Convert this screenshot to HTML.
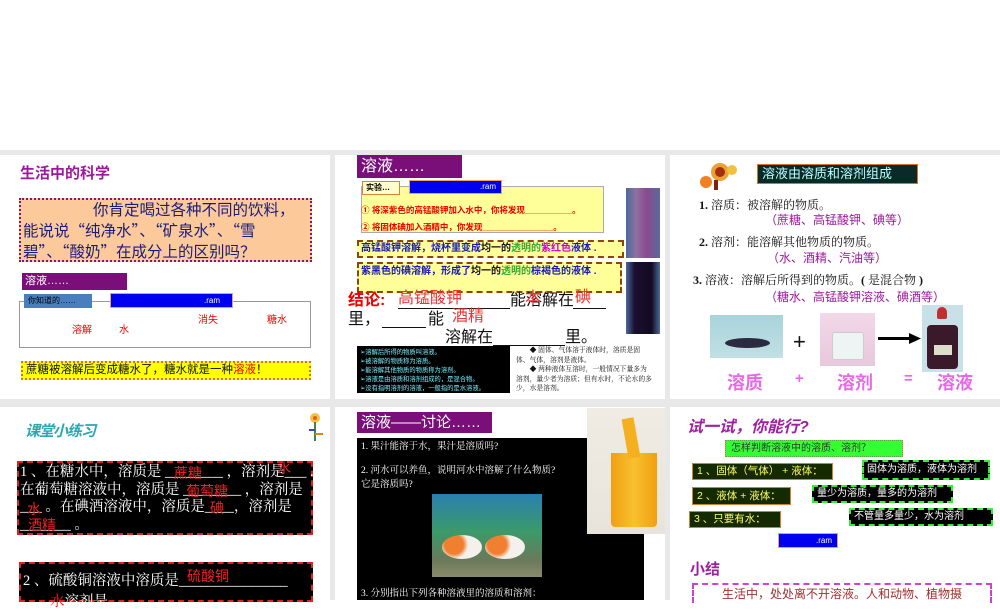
<!DOCTYPE html>
<html><head><meta charset="utf-8">
<style>
*{margin:0;padding:0;box-sizing:border-box}
body{width:1000px;height:600px;overflow:hidden;background:#fff;position:relative;font-family:"Liberation Sans","Noto Sans CJK SC",sans-serif}
.a{position:absolute;white-space:nowrap}
.p{position:absolute;background:#fff}
.serif{font-family:"Liberation Serif","Noto Serif CJK SC",serif}
.u{position:absolute;height:1px;background:#111}
.c{font-size:16px;line-height:17px}
</style></head><body>
<div class="a" style="left:0;top:150px;width:1000px;height:450px;background:#e8e8e8"></div>
<div class="p" style="left:0;top:155px;width:330px;height:244px"></div>
<div class="p" style="left:335px;top:155px;width:330px;height:244px"></div>
<div class="p" style="left:670px;top:155px;width:330px;height:244px"></div>
<div class="p" style="left:0;top:407px;width:330px;height:193px"></div>
<div class="p" style="left:335px;top:407px;width:330px;height:193px"></div>
<div class="p" style="left:670px;top:407px;width:330px;height:193px"></div>

<!-- Panel 1 -->
<div class="a" style="left:20px;top:162px;font-size:15px;font-weight:bold;color:#9b1a9b">生活中的科学</div>
<div class="a" style="left:19px;top:198px;width:293px;height:64px;background:#fcc99a;border:2px dotted #7a1a7a"></div>
<div class="a" style="left:23px;top:199px;font-size:15.5px;line-height:21px;color:#1a1a80;font-family:'Noto Sans CJK SC',sans-serif"><span style="padding-left:70px"></span>你肯定喝过各种不同的饮料，<br>能说说“纯净水”、“矿泉水”、“雪<br>碧”、“酸奶”在成分上的区别吗？</div>
<div class="a" style="left:22px;top:273px;width:105px;height:17px;background:#7a0f7a;color:#fff;font-size:11px;line-height:17px;padding-left:3px">溶液……</div>
<div class="a" style="left:19px;top:301px;width:292px;height:47px;border:1px solid #999"></div>
<div class="a" style="left:24px;top:294px;width:68px;height:14px;background:#4a7fbf;color:#000;font-size:8px;line-height:14px;padding-left:4px">你知道的……</div>
<div class="a" style="left:110px;top:293px;width:123px;height:15px;background:#0000f0;border:1px solid #f0a060;color:#fff;font-size:8px;line-height:13px;text-align:right;padding-right:12px">.ram</div>
<div class="a" style="left:198px;top:311px;font-size:10px;color:#e00">消失</div>
<div class="a" style="left:267px;top:311px;font-size:10px;color:#e00">糖水</div>
<div class="a" style="left:72px;top:321px;font-size:10px;color:#e00">溶解</div>
<div class="a" style="left:119px;top:321px;font-size:10px;color:#e00">水</div>
<div class="a" style="left:21px;top:361px;width:290px;height:19px;background:#ffff00;border:2px dotted #cc7722;font-size:11.5px;line-height:15px;padding-left:3px;color:#111">蔗糖被溶解后变成糖水了，糖水就是一种<span style="color:#e00">溶液</span>！</div>

<!-- Panel 2 -->
<div class="a" style="left:357px;top:155px;width:105px;height:23px;background:#7a0f7a;color:#fff;font-size:16px;line-height:23px;padding-left:4px">溶液……</div>
<div class="a" style="left:361px;top:186px;width:243px;height:47px;background:#ffff99;border:1px solid #aaa"></div>
<div class="a" style="left:362px;top:181px;width:38px;height:14px;background:#ffffcc;border:1px solid #e08030;font-size:8px;line-height:12px;padding-left:3px;font-weight:bold">实验…</div>
<div class="a" style="left:409px;top:180px;width:93px;height:14px;background:#0000f0;border:1px solid #f0a060;color:#fff;font-size:8px;line-height:12px;text-align:right;padding-right:5px">.ram</div>
<div class="a" style="left:361px;top:204px;font-size:8.5px;font-weight:bold;color:#e00">① 将深紫色的高锰酸钾加入水中，你将发现__________。</div>
<div class="a" style="left:361px;top:221px;font-size:8.5px;font-weight:bold;color:#e00">② 将固体碘加入酒精中，你发现_______________。</div>
<div class="a" style="left:357px;top:240px;width:267px;height:18px;background:#ffff99;border:2px dashed #8b4513;font-size:10px;font-weight:bold;line-height:14px;padding-left:2px;color:#1a1ab0">高锰酸钾溶解，烧杯里变成<span style="color:#111">均一的</span><span style="color:#3a3">透明的</span><span style="color:#c0c">紫红色</span>液体 .</div>
<div class="a" style="left:357px;top:262px;width:265px;height:31px;background:#ffff99;border:2px dashed #8b4513;font-size:10px;font-weight:bold;line-height:13px;padding:1px 0 0 2px;color:#1a1ab0;white-space:normal">紫黑色的碘溶解，形成了<span style="color:#111">均一的</span><span style="color:#3a3">透明的</span>棕褐色的液体 .</div>
<div class="a" style="left:626px;top:188px;width:34px;height:70px;background:linear-gradient(90deg,#4a6a9a,#9070a0 30%,#8a4a90 60%,#5a6a9a)"></div>
<div class="a" style="left:626px;top:262px;width:34px;height:72px;background:linear-gradient(90deg,#4a6a9a,#1a1030 25%,#120a20 75%,#4a6a9a)"></div>
<div class="a c" style="left:348px;top:292px;color:#e00;font-weight:bold">结论:</div>
<div class="u" style="left:398px;top:308px;width:112px"></div>
<div class="a c" style="left:398px;top:290px;color:#e33">高锰酸钾</div>
<div class="a c" style="left:510px;top:292px;color:#111">能溶解在</div>
<div class="a c" style="left:525px;top:290px;color:#e33">本</div>
<div class="a c" style="left:575px;top:289px;color:#e33">碘</div>
<div class="u" style="left:573px;top:308px;width:33px"></div>
<div class="a c" style="left:348px;top:311px;color:#111">里，</div>
<div class="u" style="left:382px;top:327px;width:44px"></div>
<div class="a c" style="left:428px;top:311px;color:#111">能</div>
<div class="a c" style="left:452px;top:308px;color:#e33">酒精</div>
<div class="a c" style="left:445px;top:329px;color:#111">溶解在</div>
<div class="u" style="left:493px;top:345px;width:72px"></div>
<div class="a c" style="left:565px;top:329px;color:#111">里。</div>
<div class="a" style="left:357px;top:346px;width:153px;height:47px;background:#000;color:#7ef;font-size:6.3px;line-height:9px;padding:2px 0 0 3px">➢溶解后所得的物质叫溶液。<br>➢被溶解的物质称为溶质。<br>➢能溶解其他物质的物质称为溶剂。<br>➢溶液是由溶质和溶剂组成的，是混合物。<br>➢没有指明溶剂的溶液，一般指的是水溶液。</div>
<div class="a serif" style="left:516px;top:346px;width:136px;font-size:6.8px;line-height:9.5px;white-space:normal;color:#111">　　◆ 固体、气体溶于液体时，溶质是固体、气体，溶剂是液体。<br>　　◆ 两种液体互溶时，一般情况下量多为溶剂，量少者为溶质；但有水时，不论水的多少，水是溶剂。</div>

<!-- Panel 3 -->
<svg class="a" style="left:698px;top:160px" width="42" height="32"><circle cx="8" cy="22" r="6" fill="#f08020"/><circle cx="22" cy="12" r="9" fill="#f0a030"/><circle cx="22" cy="12" r="5" fill="#a03010"/><circle cx="34" cy="10" r="5" fill="#f0c040"/><rect x="16" y="20" width="4" height="10" fill="#802010"/></svg>
<div class="a" style="left:757px;top:164px;width:161px;height:20px;background:#0a2a2a;border:1px solid #e07020;color:#bff;font-size:13px;line-height:18px;padding-left:4px">溶液由溶质和溶剂组成</div>
<div class="a serif" style="left:699px;top:196px;font-size:12px;color:#111"><b>1.</b> 溶质：被溶解的物质。</div>
<div class="a" style="left:765px;top:211px;font-size:12px;color:#9b1a9b">（蔗糖、高锰酸钾、碘等）</div>
<div class="a serif" style="left:699px;top:233px;font-size:12px;color:#111"><b>2.</b> 溶剂：能溶解其他物质的物质。</div>
<div class="a" style="left:767px;top:249px;font-size:12px;color:#9b1a9b">（水、酒精、汽油等）</div>
<div class="a serif" style="left:693px;top:271px;font-size:12px;color:#111"><b>3.</b> 溶液：溶解后所得到的物质。<b>(</b> 是混合物 <b>)</b></div>
<div class="a" style="left:765px;top:288px;font-size:12px;color:#9b1a9b">（糖水、高锰酸钾溶液、碘酒等）</div>
<div class="a" style="left:710px;top:315px;width:73px;height:43px;background:linear-gradient(#a8d4dc,#c0e0e4)"></div>
<div class="a" style="left:725px;top:338px;width:45px;height:10px;border-radius:50%;background:#2a2a40"></div>
<div class="a" style="left:793px;top:329px;font-size:22px;color:#111">+</div>
<div class="a" style="left:820px;top:313px;width:55px;height:53px;background:linear-gradient(#f2d8e8,#e8c8dc)"></div>
<div class="a" style="left:832px;top:332px;width:32px;height:28px;border:1px solid #ccc;border-radius:3px;background:#eef4f4"></div>
<div class="a" style="left:878px;top:337px;width:35px;height:3px;background:#000"></div>
<svg class="a" style="left:909px;top:333px" width="12" height="11"><path d="M0 0L12 5.5L0 11Z" fill="#000"/></svg>
<div class="a" style="left:922px;top:305px;width:41px;height:67px;background:#c8e0e8"></div>
<div class="a" style="left:927px;top:325px;width:31px;height:44px;background:#3a1a2a;border-radius:4px"></div>
<div class="a" style="left:937px;top:307px;width:10px;height:12px;background:#c03030;border-radius:5px 5px 2px 2px"></div>
<div class="a" style="left:934px;top:345px;width:18px;height:10px;background:#ddc"></div>
<div class="a" style="left:727px;top:369px;font-size:18px;font-weight:bold;color:#e868e8">溶质</div>
<div class="a" style="left:795px;top:370px;font-size:15px;font-weight:bold;color:#e868e8">+</div>
<div class="a" style="left:837px;top:369px;font-size:18px;font-weight:bold;color:#e868e8">溶剂</div>
<div class="a" style="left:904px;top:370px;font-size:15px;font-weight:bold;color:#e868e8">=</div>
<div class="a" style="left:937px;top:369px;font-size:18px;font-weight:bold;color:#e868e8">溶液</div>

<!-- Row2 Panel 1 -->
<div class="a" style="left:25px;top:420px;font-size:15px;font-weight:bold;font-style:italic;color:#2aa8b0;letter-spacing:-1px">课堂小练习</div>
<svg class="a" style="left:305px;top:412px" width="20" height="30"><circle cx="10" cy="6" r="5" fill="#f5c040"/><circle cx="10" cy="6" r="2" fill="#e06020"/><line x1="10" y1="10" x2="10" y2="29" stroke="#3a8a3a" stroke-width="2"/><line x1="4" y1="18" x2="10" y2="18" stroke="#4040c0" stroke-width="2"/><line x1="10" y1="22" x2="18" y2="22" stroke="#e08020" stroke-width="2"/></svg>
<div class="a" style="left:17px;top:461px;width:296px;height:74px;background:#000;border:2px dashed #e02020"></div>
<div class="a serif" style="left:20px;top:464px;font-size:14.5px;line-height:17.5px;color:#fff">1 、在糖水中，溶质是 ________ ，溶剂是___ .<br>在葡萄糖溶液中，溶质是 ________ ，溶剂是<br>___ 。在碘酒溶液中，溶质是____，溶剂是<br>_______ 。</div>
<div class="a" style="left:174px;top:463px;font-size:14px;color:#e22">蔗糖</div>
<div class="a" style="left:277px;top:458px;font-size:14px;color:#e22">水</div>
<div class="a" style="left:186px;top:481px;font-size:14px;color:#e22">葡萄糖</div>
<div class="a" style="left:27px;top:499px;font-size:14px;color:#e22">水</div>
<div class="a" style="left:210px;top:498px;font-size:14px;color:#e22">碘</div>
<div class="a" style="left:28px;top:515px;font-size:14px;color:#e22">酒精</div>
<div class="a" style="left:19px;top:562px;width:294px;height:40px;background:#000;border:2px dashed #e02020"></div>
<div class="a serif" style="left:23px;top:569px;font-size:14.5px;color:#fff">2 、硫酸铜溶液中溶质是_______________</div>
<div class="a" style="left:187px;top:566px;font-size:14px;color:#e22">硫酸铜</div>
<div class="a serif" style="left:50px;top:590px;font-size:14.5px;color:#fff"><span style="color:#e22">水</span>溶剂是</div>

<!-- Row2 Panel 2 -->
<div class="a" style="left:357px;top:412px;width:135px;height:21px;background:#7a0f7a;color:#fff;font-size:15px;line-height:21px;padding-left:4px">溶液——讨论……</div>
<div class="a" style="left:357px;top:438px;width:287px;height:162px;background:#000"></div>
<div class="a serif" style="left:361px;top:441px;font-size:9.5px;color:#fff;line-height:13px">1. 果汁能溶于水，果汁是溶质吗?</div>
<div class="a serif" style="left:361px;top:465px;font-size:9.5px;color:#fff;line-height:13.5px">2. 河水可以养鱼，说明河水中溶解了什么物质?<br>它是溶质吗?</div>
<div class="a" style="left:432px;top:494px;width:110px;height:83px;background:linear-gradient(#2a80b0,#3a9a6a 45%,#6a7a5a 80%,#8a8a6a)"></div>
<div class="a" style="left:442px;top:535px;width:40px;height:24px;border-radius:50%;background:radial-gradient(circle at 30% 40%,#f08030 30%,#f4f0ec 45%)"></div>
<div class="a" style="left:485px;top:535px;width:40px;height:24px;border-radius:50%;background:radial-gradient(circle at 30% 40%,#f08030 30%,#f4f0ec 45%)"></div>
<div class="a serif" style="left:361px;top:585px;font-size:9.5px;color:#fff">3. 分别指出下列各种溶液里的溶质和溶剂：</div>
<div class="a" style="left:587px;top:408px;width:78px;height:126px;background:linear-gradient(#f0ece4,#e8e4dc)"></div>
<div class="a" style="left:611px;top:453px;width:46px;height:74px;background:linear-gradient(90deg,#f0a010,#f8c030 50%,#f0a010);border-radius:0 0 4px 4px"></div>
<div class="a" style="left:625px;top:418px;width:12px;height:40px;background:#f4b020;transform:rotate(-10deg)"></div>

<!-- Row2 Panel 3 -->
<div class="a" style="left:687px;top:413px;font-size:16px;font-weight:bold;font-style:italic;color:#a020a0">试一试，你能行?</div>
<div class="a" style="left:725px;top:440px;width:178px;height:17px;background:#33ff33;border:1px dotted #886;font-size:10px;line-height:15px;padding-left:5px;color:#333">怎样判断溶液中的溶质、溶剂？</div>
<div class="a" style="left:692px;top:463px;width:141px;height:17px;background:#142a00;border:1px solid #d08030;font-size:10.5px;line-height:15px;padding-left:4px;color:#ff6">1 、固体（气体） +  液体：</div>
<div class="a" style="left:692px;top:487px;width:99px;height:18px;background:#142a00;border:1px solid #d08030;font-size:10.5px;line-height:16px;padding-left:4px;color:#ff6">2 、液体  +  液体：</div>
<div class="a" style="left:689px;top:511px;width:92px;height:17px;background:#142a00;border:1px solid #d08030;font-size:10.5px;line-height:15px;padding-left:4px;color:#ff6">3 、只要有水：</div>
<div class="a" style="left:862px;top:460px;width:128px;height:20px;background:#000;border:2px dashed #33ee33;font-size:10px;line-height:16px;padding-left:3px;color:#fff">固体为溶质，液体为溶剂</div>
<div class="a" style="left:812px;top:485px;width:141px;height:18px;background:#000;border:2px dashed #33ee33;font-size:10px;line-height:14px;padding-left:3px;color:#fff">量少为溶质，量多的为溶剂</div>
<div class="a" style="left:849px;top:508px;width:144px;height:18px;background:#000;border:2px dashed #33ee33;font-size:10px;line-height:14px;padding-left:3px;color:#fff">不管量多量少，水为溶剂</div>
<div class="a" style="left:778px;top:533px;width:60px;height:15px;background:#0000f0;border:1px solid #f0a060;color:#fff;font-size:8px;line-height:13px;text-align:right;padding-right:5px">.ram</div>
<div class="a" style="left:690px;top:558px;font-size:15px;font-weight:bold;color:#a020a0">小结</div>
<div class="a" style="left:692px;top:583px;width:300px;height:20px;border:2px dashed #d040d0;border-bottom:none"></div>
<div class="a" style="left:722px;top:585px;font-size:12px;color:#a03030">生活中，处处离不开溶液。人和动物、植物摄</div>
</body></html>
